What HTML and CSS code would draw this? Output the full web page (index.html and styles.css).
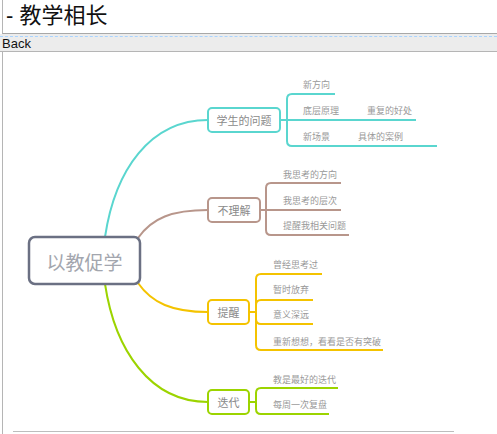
FILE: index.html
```html
<!DOCTYPE html>
<html lang="zh">

<head>
    <meta charset="UTF-8">
    <title>教学相长</title>
    <link rel="stylesheet" href="styles.css">
</head>

<body>
    <div class="title-frame">
        <h1 class="title">- 教学相长</h1>
    </div>
    <div class="nav-bar">
        <a class="back" href="#">Back</a>
    </div>
    <div class="map-frame">
        <svg class="map" width="494" height="379" viewBox="3 52 494 379">
            <!-- main branches -->
            <g class="branch" fill="none" stroke-width="2">
                <path stroke="#5ad6cf" d="M105 237 C 115 170 150 120 208 120" />
                <path stroke="#b8968b" d="M138 238 C 152 218 172 210 208 210" />
                <path stroke="#f4c300" d="M138 283 C 152 303 172 312 208 312" />
                <path stroke="#9cd400" d="M105 284 C 115 350 150 402 208 402" />
            </g>

            <!-- 学生的问题 -->
            <g fill="none" stroke="#5ad6cf" stroke-width="2">
                <path d="M280 120 H416" />
                <path d="M287 120 V99 Q287 94 292 94 H335" />
                <path d="M287 120 V141 Q287 146 292 146 H437" />
                <rect x="208" y="108" width="72" height="24" rx="4" fill="#fff" />
            </g>
            <text class="node" x="244" y="120">学生的问题</text>
            <text class="leaf" x="303" y="84">新方向</text>
            <text class="leaf" x="303" y="110">底层原理</text>
            <text class="leaf" x="367" y="110">重复的好处</text>
            <text class="leaf" x="303" y="136">新场景</text>
            <text class="leaf" x="358" y="136">具体的案例</text>

            <!-- 不理解 -->
            <g fill="none" stroke="#b8968b" stroke-width="2">
                <path d="M260 210 H341" />
                <path d="M266 210 V188 Q266 183 271 183 H341" />
                <path d="M266 210 V230 Q266 235 271 235 H349" />
                <rect x="208" y="198" width="52" height="24" rx="4" fill="#fff" />
            </g>
            <text class="node" x="234" y="210">不理解</text>
            <text class="leaf" x="283" y="174">我思考的方向</text>
            <text class="leaf" x="283" y="200">我思考的层次</text>
            <text class="leaf" x="283" y="225">提醒我相关问题</text>

            <!-- 提醒 -->
            <g fill="none" stroke="#f4c300" stroke-width="2">
                <path d="M249 312 H256" />
                <path d="M256 312 V279 Q256 274 261 274 H322" />
                <path d="M256 312 V305 Q256 300 261 300 H313" />
                <path d="M256 312 V319 Q256 324 261 324 H313" />
                <path d="M256 312 V345 Q256 350 261 350 H383" />
                <rect x="208" y="300" width="41" height="24" rx="4" fill="#fff" />
            </g>
            <text class="node" x="228.5" y="312">提醒</text>
            <text class="leaf" x="273" y="264">曾经思考过</text>
            <text class="leaf" x="273" y="289">暂时放弃</text>
            <text class="leaf" x="273" y="314">意义深远</text>
            <text class="leaf" x="273" y="341">重新想想，看看是否有突破</text>

            <!-- 迭代 -->
            <g fill="none" stroke="#9cd400" stroke-width="2">
                <path d="M249 402 H256" />
                <path d="M256 402 V393 Q256 388 261 388 H338" />
                <path d="M256 402 V409 Q256 414 261 414 H329" />
                <rect x="208" y="390" width="41" height="24" rx="4" fill="#fff" />
            </g>
            <text class="node" x="228.5" y="402">迭代</text>
            <text class="leaf" x="273" y="379">教是最好的迭代</text>
            <text class="leaf" x="273" y="404">每周一次复盘</text>

            <!-- root -->
            <rect x="29" y="237" width="111" height="47" rx="6" fill="#fff" stroke="#6b7083" stroke-width="2.5" />
            <text class="root" x="84.5" y="261">以教促学</text>
        </svg>
        <div class="rule"></div>
    </div>
</body>

</html>
```

FILE: styles.css
```css
* {
  box-sizing: border-box;
}

body {
  margin: 0;
  font-family: "Liberation Sans", "Noto Sans CJK SC", sans-serif;
  background: #fff;
  overflow: hidden;
}

.title-frame {
  margin-left: 2px;
  height: 34px;
  border-left: 1px solid #b5b5b5;
  border-bottom: 1px solid #a8a8a8;
}

.title {
  margin: 0;
  padding: 3px 0 0 3px;
  font-size: 22px;
  font-weight: normal;
  line-height: 26px;
  color: #111;
}

.nav-bar {
  height: 18px;
  padding-top: 2px;
  background: #ececec;
  border-bottom: 1px solid #b5b5b5;
}

.back {
  display: block;
  height: 15px;
  padding-left: 2px;
  border-top: 1px dashed #a9d4ff;
  font-size: 13px;
  line-height: 14px;
  color: #111;
  text-decoration: none;
}

.map-frame {
  margin-left: 2px;
  height: 382px;
  border-left: 1px solid #b5b5b5;
}

.map {
  display: block;
}

.map text {
  font-family: "Noto Sans CJK SC", "Liberation Sans", sans-serif;
  dominant-baseline: central;
}

.map .root {
  font-size: 19px;
  fill: #a3a6ae;
  text-anchor: middle;
}

.map .node {
  font-size: 11px;
  fill: #8a8a8a;
  text-anchor: middle;
}

.map .leaf {
  font-size: 9px;
  fill: #999;
}

.rule {
  width: 441px;
  margin-left: 10px;
  border-top: 1px solid #bdbdbd;
}
```
